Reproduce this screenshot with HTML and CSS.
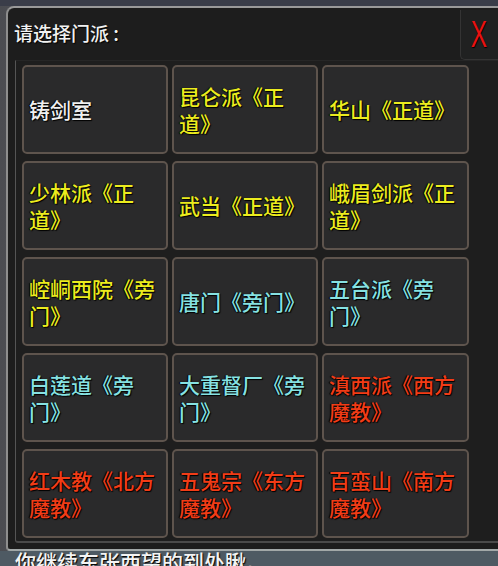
FILE: index.html
```html
<!DOCTYPE html>
<html lang="zh-CN">
<head>
<meta charset="utf-8">
<title>请选择门派</title>
<link rel="stylesheet" href="styles.css">
</head>
<body>
<div class="page">
  <div class="top-strip"></div>
  <div class="mid">
    <div class="left-strip"></div>
    <div class="dialog">
      <div class="header">
        <div class="title">请选择门派 :</div>
        <div class="close"><span class="close-x">X</span></div>
      </div>
      <div class="panel">
        <div class="grid">
          <div class="cell white">铸剑室</div>
          <div class="cell yellow">昆仑派《正道》</div>
          <div class="cell yellow">华山《正道》</div>
          <div class="cell yellow">少林派《正道》</div>
          <div class="cell yellow">武当《正道》</div>
          <div class="cell yellow">峨眉剑派《正道》</div>
          <div class="cell yellow">崆峒西院《旁门》</div>
          <div class="cell cyan">唐门《旁门》</div>
          <div class="cell cyan">五台派《旁门》</div>
          <div class="cell cyan">白莲道《旁门》</div>
          <div class="cell cyan">大重督厂《旁门》</div>
          <div class="cell red">滇西派《西方魔教》</div>
          <div class="cell red">红木教《北方魔教》</div>
          <div class="cell red">五鬼宗《东方魔教》</div>
          <div class="cell red">百蛮山《南方魔教》</div>
        </div>
      </div>
    </div>
  </div>
  <div class="bottom-strip">你继续东张西望的到处瞅。</div>
</div>
</body>
</html>
```
FILE: styles.css
```css
html, body {
  margin: 0;
  padding: 0;
  background: #4e5a63;
}
.page {
  width: 498px;
  height: 566px;
  overflow: hidden;
  display: flex;
  flex-direction: column;
  font-family: "Noto Sans CJK SC", "Noto Sans", sans-serif;
  background: #4e5a63;
}
.top-strip {
  height: 6px;
  flex: none;
  background: #3a3d49;
}
.mid {
  display: flex;
  flex: none;
  background: linear-gradient(to right, #4b4c51, #6e7075 60%, #5a5b60);
}
.left-strip {
  width: 6px;
  flex: none;
}
.dialog {
  flex: 1;
  height: 541px;
  border-top: 2px solid #9a9a9a;
  border-left: 2px solid #8e8e8e;
  border-bottom: 2px solid #a2a8a8;
  border-top-left-radius: 8px;
  border-bottom-left-radius: 4px;
  background: #1d1d1d;
  display: flex;
  flex-direction: column;
}
.header {
  height: 52px;
  display: flex;
  align-items: flex-start;
  flex: none;
}
.title {
  flex: 1;
  padding-left: 6px;
  padding-top: 12px;
  font-size: 19px;
  line-height: 26px;
  font-weight: 500;
  color: #f2f2f2;
  text-shadow: 1px 1px 1px #000;
}
.close {
  width: 37px;
  height: 49px;
  margin-top: 2px;
  background: #202121;
  border-left: 1px solid #343434;
  border-bottom: 1px solid #343434;
  border-bottom-left-radius: 5px;
  display: flex;
  align-items: center;
  justify-content: center;
}
.close-x {
  display: inline-block;
  font-family: "Liberation Sans", sans-serif;
  font-size: 36px;
  line-height: 36px;
  color: #e81212;
  transform: scaleX(0.68);
  text-shadow: 1px 1px 1px #000;
}
.panel {
  flex: none;
  height: 476px;
  margin-left: 7px;
  border-top: 1px solid #262626;
  border-left: 1px solid #555555;
  border-bottom: 2px solid #4a4a4a;
  border-bottom-left-radius: 3px;
  padding: 4px 0 0 6px;
  background: #1e1e1e;
}
.grid {
  display: grid;
  grid-template-columns: 146px 146px 147px;
  grid-auto-rows: 89px;
  column-gap: 4px;
  row-gap: 7px;
}
.cell {
  box-sizing: border-box;
  background: #2a2a2b;
  border: 2px solid #5e544d;
  border-radius: 5px;
  padding: 0 5px;
  display: flex;
  align-items: center;
  font-size: 21px;
  line-height: 27px;
  font-weight: 500;
  text-shadow: 1px 1px 1px #000, -1px 0 1px #000;
}
.white { color: #f0f0f0; }
.yellow { color: #ecec1e; }
.cyan { color: #86e2e2; }
.red { color: #f23c16; }
.bottom-strip {
  flex: none;
  height: 40px;
  padding-left: 15px;
  font-size: 21px;
  line-height: 21px;
  font-weight: 500;
  color: #f4f4f4;
  background: #4e5a63;
  text-shadow: 1px 1px 1px #000;
}
```
